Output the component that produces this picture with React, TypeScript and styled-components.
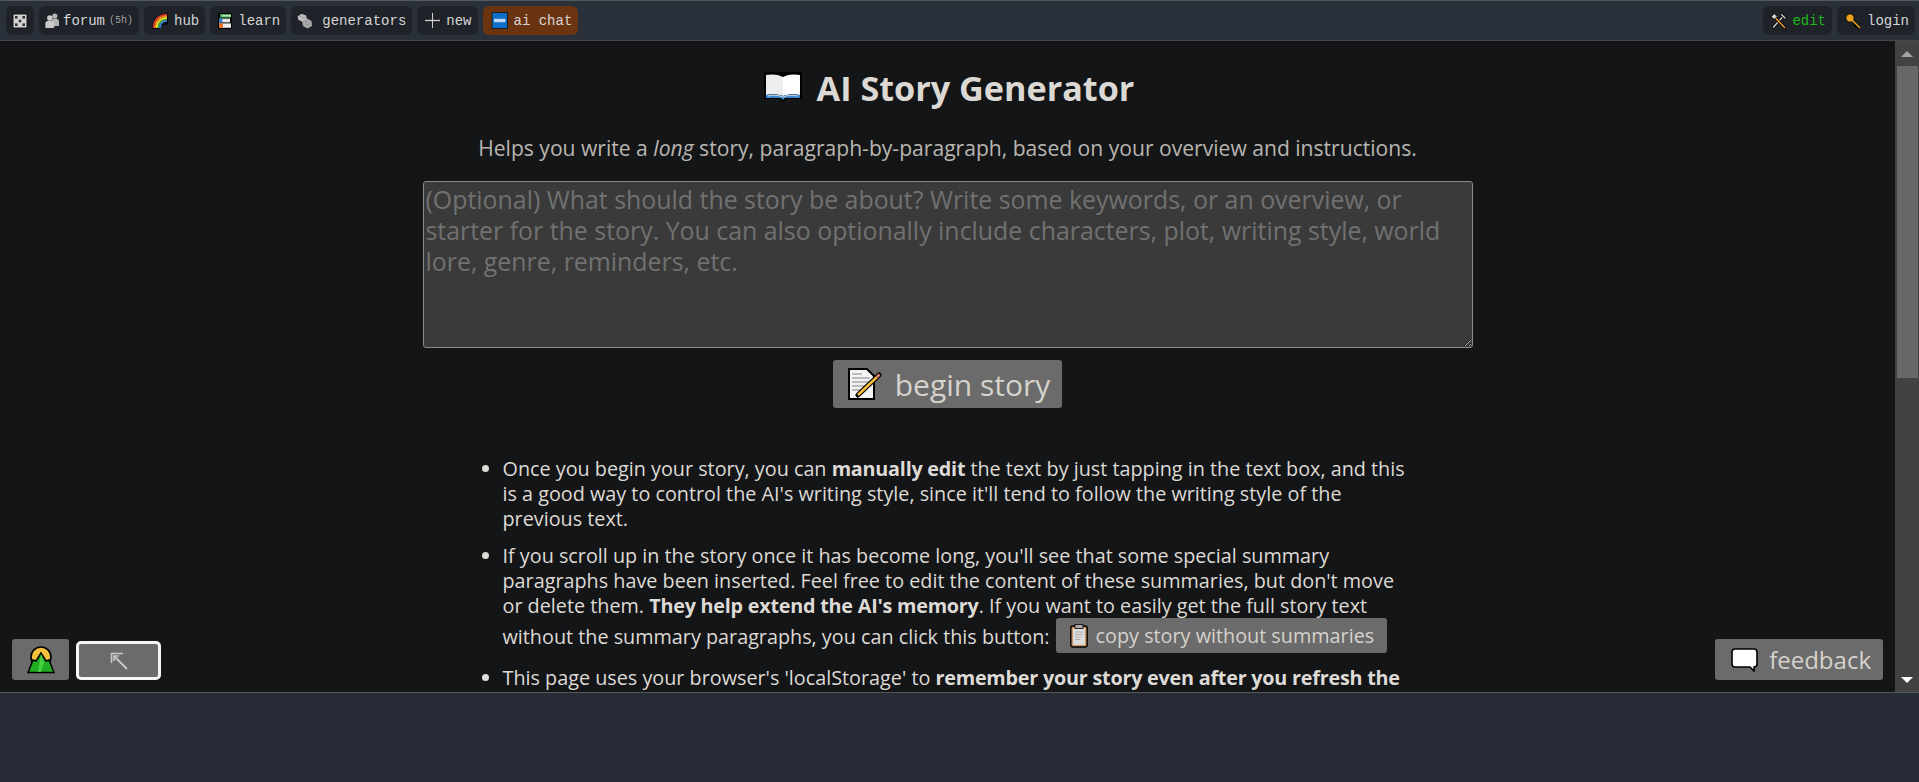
import React from "react";
import styled, { createGlobalStyle } from "styled-components";

const GlobalStyle = createGlobalStyle`
  html, body {
    margin: 0;
    height: 100%;
    overflow: hidden;
    background: #262b36;
  }
  body {
    font-family: "Open Sans", "Noto Sans", sans-serif;
  }
`;

const Page = styled.div`
  height: 782px;
  display: flex;
  flex-direction: column;
  background: #262b36;
`;

const TopBar = styled.nav`
  height: 41px;
  flex: none;
  padding: 5px 4px 0 6px;
  box-sizing: border-box;
  display: flex;
  justify-content: space-between;
  background: #2a303a;
  border-top: 1px solid #55585c;
  border-bottom: 1px solid #45484c;
`;

const NavGroup = styled.div`
  display: flex;
  gap: 5px;
`;

const NavItem = styled.a<{ $accent?: boolean; $color?: string }>`
  height: 29px;
  padding: 0 6px;
  display: flex;
  align-items: center;
  gap: 4px;
  border-radius: 6px;
  background: ${(p) => (p.$accent ? "#6b3410" : "#1f2329")};
  color: ${(p) => p.$color || "#d4d4d4"};
  font-family: "Liberation Mono", monospace;
  font-size: 14px;
  white-space: pre;
`;

const Small = styled.span`
  font-size: 10px;
  color: #a0a0a0;
`;

const Main = styled.div`
  height: 652px;
  flex: none;
  position: relative;
  display: flex;
  background: #141517;
  border-bottom: 1px solid #55575a;
  box-sizing: border-box;
`;

const Content = styled.main`
  flex: 1;
  min-width: 0;
  overflow: hidden;
  color: #d8d4cf;
  display: flex;
  flex-direction: column;
  align-items: center;
`;

const Title = styled.h1`
  margin: 24px 0 0 3px;
  height: 44px;
  display: flex;
  align-items: center;
  gap: 15px;
  font-size: 34.2px;
  font-weight: 700;
  color: #dcd9d4;
`;

const Subtitle = styled.p`
  margin: 25px 0 0;
  font-size: 21.1px;
  line-height: 27px;
  color: #b9b5b0;
`;

const Overview = styled.textarea`
  display: block;
  width: 1050px;
  height: 167px;
  margin-top: 20px;
  padding: 2px;
  box-sizing: border-box;
  flex: none;
  color-scheme: dark;
  background: #3a3a3a;
  border: 1px solid #8a8a8a;
  border-radius: 3px;
  color: #ddd;
  font-family: inherit;
  font-size: 24.9px;
  line-height: 31px;
  outline: none;
  &::placeholder {
    color: #717171;
  }
`;

const BeginButton = styled.button`
  margin-top: 12px;
  height: 48px;
  padding: 0 12px 0 15px;
  flex: none;
  display: flex;
  align-items: center;
  gap: 13px;
  border: none;
  border-radius: 3px;
  background: #6b6b6b;
  color: #d6d2cc;
  font-family: inherit;
  font-size: 30px;
`;

const Tips = styled.ul`
  width: 908px;
  margin: 48px 0 0;
  padding: 0 22px 0 40px;
  flex: none;
  box-sizing: content-box;
  font-size: 19.8px;
  line-height: 25px;
  color: #dedad5;
`;

const Tip = styled.li`
  margin-bottom: 12px;
  &:last-child {
    margin-bottom: 0;
  }
`;

const Strong = styled.b`
  letter-spacing: -0.23px;
`;

const InlineButton = styled.button`
  display: inline-flex;
  align-items: center;
  gap: 8px;
  height: 35px;
  padding: 0 13px 0 14px;
  margin-left: 1px;
  border: none;
  border-radius: 3px;
  background: #6b6b6b;
  color: #d6d2cc;
  font-family: inherit;
  font-size: 19.8px;
  vertical-align: -3.5px;
`;

const ScrollTrack = styled.div`
  width: 24px;
  flex: none;
  display: flex;
  flex-direction: column;
  background: #424242;
`;

const ArrowBox = styled.div<{ $down?: boolean }>`
  height: 25px;
  flex: none;
  margin-top: ${(p) => (p.$down ? "auto" : "0")};
  display: flex;
  align-items: center;
  justify-content: center;
  &::before {
    content: "";
    border-left: 6px solid transparent;
    border-right: 6px solid transparent;
    ${(p) =>
      p.$down ? "border-top: 6px solid #fff;" : "border-bottom: 6px solid #a3a3a3;"}
  }
`;

const ScrollThumb = styled.div`
  height: 312px;
  flex: none;
  margin: 0 1px 0 2px;
  background: #686868;
`;

const FloatLeft = styled.div`
  position: absolute;
  left: 12px;
  bottom: 12px;
  display: flex;
  align-items: flex-end;
  gap: 7px;
`;

const FloatButton = styled.button<{ $outlined?: boolean }>`
  width: ${(p) => (p.$outlined ? "85px" : "57px")};
  height: ${(p) => (p.$outlined ? "39px" : "41px")};
  padding: 0;
  box-sizing: border-box;
  display: flex;
  align-items: center;
  justify-content: center;
  background: #6b6b6b;
  border: ${(p) => (p.$outlined ? "3px solid #f5f5f5" : "none")};
  border-radius: ${(p) => (p.$outlined ? "5px" : "3px")};
`;

const Feedback = styled.button`
  position: absolute;
  right: 36px;
  bottom: 12px;
  height: 41px;
  padding: 0 12px 0 16px;
  display: flex;
  align-items: center;
  gap: 11px;
  border: none;
  border-radius: 3px;
  background: #6b6b6b;
  color: #d6d2cc;
  font-family: inherit;
  font-size: 24px;
`;

const Footer = styled.div`
  flex: 1;
  background: #262b36;
`;

const DieIcon = () => (
  <svg width="16" height="16" viewBox="0 0 16 16">
    <rect x="1" y="1" width="14" height="14" fill="#d4d4d4" stroke="#111" />
    <rect x="3" y="3" width="2.6" height="2.6" fill="#333" />
    <rect x="10.4" y="3" width="2.6" height="2.6" fill="#333" />
    <rect x="6.7" y="6.7" width="2.6" height="2.6" fill="#333" />
    <rect x="3" y="10.4" width="2.6" height="2.6" fill="#333" />
    <rect x="10.4" y="10.4" width="2.6" height="2.6" fill="#333" />
  </svg>
);

const PeopleIcon = () => (
  <svg width="14" height="15" viewBox="0 0 14 15" fill="#b5b5b5">
    <circle cx="9.8" cy="3" r="2.6" />
    <path d="M6.5 13V8C6.5 6.6 8 5.6 10 5.6S14 6.6 14 8V13Z" />
    <circle cx="4.8" cy="5" r="2.7" fill="#c9c9c9" />
    <path d="M.4 15V10.2C.4 8.6 2.4 7.6 4.8 7.6S9.2 8.6 9.2 10.2V15Z" fill="#c9c9c9" />
  </svg>
);

const RainbowIcon = () => (
  <svg width="20" height="16" viewBox="-2 0 20 16" fill="none" strokeWidth="1.7">
    <path d="M.5 16C.5 7 6 .8 15.5.8V11C12 11 6.5 12 6 16Z" fill="#000" stroke="#000" strokeWidth="1" />
    <path d="M1.5 15C1.5 7 7 1.6 15 1.6" stroke="#e03030" />
    <path d="M3.1 15C3.1 8 8 3.2 15 3.2" stroke="#f08a20" />
    <path d="M4.7 15C4.7 9 9 4.8 15 4.8" stroke="#f6dc30" />
    <path d="M6.3 15C6.3 10 10 6.4 15 6.4" stroke="#48b840" />
    <path d="M7.9 15C7.9 11 11 8 15 8" stroke="#3a80e0" />
  </svg>
);

const BooksIcon = () => (
  <svg width="18" height="16" viewBox="-2 0 18 16">
    <rect x="0" y="0" width="14" height="16" fill="#000" />
    <rect x="2" y="1" width="11" height="3.6" fill="#3fae4a" />
    <rect x="4" y="2.2" width="9" height="1.2" fill="#e8e8e8" />
    <rect x="1" y="5.6" width="11" height="3.8" fill="#e6e6e6" />
    <rect x="1" y="5.6" width="3.4" height="3.8" fill="#2f7fd0" />
    <rect x="1" y="10.4" width="12" height="4.4" fill="#eee" />
    <rect x="1" y="10.4" width="4" height="4.4" fill="#e8702a" />
  </svg>
);

const DiceIcon = () => (
  <svg width="21" height="16" viewBox="0 0 21 16">
    <path d="M.5 3.5 4.5.8 9 2.5l1 3.6L6 9 1.5 7Z" fill="#bdbdbd" />
    <path d="M5 8l5-2.5 4.5 2.5.5 5-4.5 2.5L6 13Z" fill="#a8a8a8" />
    <circle cx="3.5" cy="3.2" r="0.8" fill="#8a8a8a" />
    <circle cx="6.8" cy="4.5" r="0.8" fill="#8a8a8a" />
    <circle cx="9" cy="8.6" r="0.8" fill="#8a8a8a" />
    <circle cx="11" cy="11.8" r="0.8" fill="#8a8a8a" />
  </svg>
);

const PlusIcon = () => (
  <svg width="19" height="17" viewBox="-1 0 19 17">
    <path d="M8.5 0v17M0 8.5h17" stroke="#000" strokeWidth="2.6" />
    <path d="M8.5 .8v15.4M.8 8.5h15.4" stroke="#cfcfcf" strokeWidth="1.3" />
  </svg>
);

const NewIcon = () => (
  <svg width="21" height="17" viewBox="-2.5 0 21 17">
    <rect x="0.5" y="0.5" width="15.5" height="16" fill="#0f6fc8" stroke="#1c1c1c" />
    <rect x="2.5" y="6.8" width="11.5" height="3.4" fill="#bcd8f2" />
  </svg>
);

const ToolsIcon = () => (
  <svg width="19" height="16" viewBox="-1.5 0 19 16" fill="none" strokeLinecap="round">
    <path d="M3 14 13 3" stroke="#000" strokeWidth="3" />
    <path d="M3 14 13 3" stroke="#d8d8d8" strokeWidth="1.4" />
    <path d="M11 1.5l3.5 3.5" stroke="#000" strokeWidth="3" />
    <path d="M11 1.5l3.5 3.5" stroke="#d8d8d8" strokeWidth="1.4" />
    <path d="M4 4l10 10.5" stroke="#000" strokeWidth="3" />
    <path d="M4 4l10 10.5" stroke="#e89a28" strokeWidth="1.6" />
    <path d="M.8 3.5 3.8.8 6.8 3.5 3.8 6.2Z" fill="#d8d8d8" stroke="#000" strokeWidth="0.7" />
  </svg>
);

const KeyIcon = () => (
  <svg width="20" height="16" viewBox="-2 0 20 16" fill="none">
    <path d="M6 6l9 9M11.5 11.5l-2 2M13.5 13.5l-1.5 1.5" stroke="#000" strokeWidth="3" />
    <circle cx="5" cy="5" r="4.2" fill="#e8a020" stroke="#000" />
    <path d="M6 6l9 9" stroke="#e8a020" strokeWidth="1.7" />
  </svg>
);

const BookIcon = () => (
  <svg width="38" height="30" viewBox="0 0 38 30">
    <path d="M0 0h38v27H22l-3 3-3-3H0Z" fill="#000" />
    <path d="M2 3c5-1 12-1 17 2v19c-5-2-12-2-17-1Z" fill="#eeeeee" />
    <path d="M36 3c-5-1-12-1-17 2v19c5-2 12-2 17-1Z" fill="#fff" />
    <path d="M2 23c5-1 12-1 17 1 5-2 12-2 17-1v3H21l-2 2-2-2H2Z" fill="#3a86d0" />
    <path d="M4 24c5-1 11-1 15 1 4-2 10-2 15-1" stroke="#cfcfcf" fill="none" />
  </svg>
);

const MemoIcon = () => (
  <svg width="34" height="32" viewBox="0 0 34 32">
    <path d="M1 1h18l7 7v23H1Z" fill="#f4f4f4" stroke="#000" strokeWidth="2" />
    <path d="M4 6h10M4 10h18M4 14h18M4 18h14M4 22h10" stroke="#a8a8a8" strokeWidth="1.3" />
    <path d="M10 27 31 7" stroke="#000" strokeWidth="5" strokeLinecap="round" />
    <path d="M10 27 29 9" stroke="#f5bd3a" strokeWidth="2.6" />
    <path d="M29 9 31.5 6.5" stroke="#e98080" strokeWidth="2.6" />
  </svg>
);

const ClipboardIcon = () => (
  <svg width="18" height="24" viewBox="0 0 18 24">
    <rect x="0.8" y="2" width="16.4" height="21" rx="2" fill="#c9925e" stroke="#000" strokeWidth="1.4" />
    <rect x="3" y="4" width="12" height="17" fill="#dcdcdc" />
    <rect x="5" y="0.6" width="8" height="4" fill="#aaa" stroke="#000" strokeWidth="0.8" />
    <path d="M5 8h8M5 10.5h8M5 13h6M5 15.5h5" stroke="#b0b0b0" />
  </svg>
);

const CampIcon = () => (
  <svg width="28" height="28" viewBox="0 0 28 28">
    <circle cx="14" cy="11" r="10" fill="#f5c13c" stroke="#000" strokeWidth="1.6" />
    <path d="M1 26.5 6 14l3 1 5-8 5 8 3-1 5 12.5Z" fill="#1fae22" stroke="#000" strokeWidth="1.5" />
    <path d="M14 8l-3 18h3l3-10Z" fill="#49cf3f" />
  </svg>
);

const ArrowUpLeftIcon = () => (
  <svg width="18" height="18" viewBox="0 0 18 18" fill="none" stroke="#c8c8c8">
    <path d="M1.5 11V1.5H13" strokeWidth="1.6" />
    <path d="M4.5 4.5 17 17" strokeWidth="2" />
    <path d="M4 9V4h5" strokeWidth="1.6" />
  </svg>
);

const SpeechIcon = () => (
  <svg width="27" height="24" viewBox="0 0 27 24">
    <path
      d="M4 1h19a3 3 0 0 1 3 3v12a3 3 0 0 1-3 3v4l-4-4H4a3 3 0 0 1-3-3V4a3 3 0 0 1 3-3Z"
      fill="#fff"
      stroke="#000"
      strokeWidth="1.6"
    />
  </svg>
);

function App() {
  return (
    <Page>
      <GlobalStyle />
      <TopBar>
        <NavGroup>
          <NavItem>
            <DieIcon />
          </NavItem>
          <NavItem>
            <PeopleIcon />
            forum<Small>(5h)</Small>
          </NavItem>
          <NavItem>
            <RainbowIcon />
            hub
          </NavItem>
          <NavItem>
            <BooksIcon />
            learn
          </NavItem>
          <NavItem>
            <DiceIcon />
            generators
          </NavItem>
          <NavItem>
            <PlusIcon />
            new
          </NavItem>
          <NavItem $accent>
            <NewIcon />
            ai chat
          </NavItem>
        </NavGroup>
        <NavGroup>
          <NavItem $color="#19b819">
            <ToolsIcon />
            edit
          </NavItem>
          <NavItem>
            <KeyIcon />
            login
          </NavItem>
        </NavGroup>
      </TopBar>
      <Main>
        <Content>
          <Title>
            <BookIcon />
            AI Story Generator
          </Title>
          <Subtitle>
            Helps you write a <em>long</em> story, paragraph-by-paragraph, based on your
            overview and instructions.
          </Subtitle>
          <Overview placeholder="(Optional) What should the story be about? Write some keywords, or an overview, or starter for the story. You can also optionally include characters, plot, writing style, world lore, genre, reminders, etc." />
          <BeginButton>
            <MemoIcon />
            begin story
          </BeginButton>
          <Tips>
            <Tip>
              Once you begin your story, you can <Strong>manually edit</Strong> the text by
              just tapping in the text box, and this is a good way to control the AI's
              writing style, since it'll tend to follow the writing style of the previous
              text.
            </Tip>
            <Tip>
              If you scroll up in the story once it has become long, you'll see that some
              special summary paragraphs have been inserted. Feel free to edit the content
              of these summaries, but don't move or delete them.{" "}
              <Strong>They help extend the AI's memory</Strong>. If you want to easily get
              the full story text without the summary paragraphs, you can click this
              button:{" "}
              <InlineButton>
                <ClipboardIcon />
                copy story without summaries
              </InlineButton>
            </Tip>
            <Tip>
              This page uses your browser's 'localStorage' to{" "}
              <Strong>remember your story even after you refresh the page</Strong>.
            </Tip>
          </Tips>
        </Content>
        <ScrollTrack>
          <ArrowBox />
          <ScrollThumb />
          <ArrowBox $down />
        </ScrollTrack>
        <FloatLeft>
          <FloatButton>
            <CampIcon />
          </FloatButton>
          <FloatButton $outlined>
            <ArrowUpLeftIcon />
          </FloatButton>
        </FloatLeft>
        <Feedback>
          <SpeechIcon />
          feedback
        </Feedback>
      </Main>
      <Footer />
    </Page>
  );
}

export default App;
